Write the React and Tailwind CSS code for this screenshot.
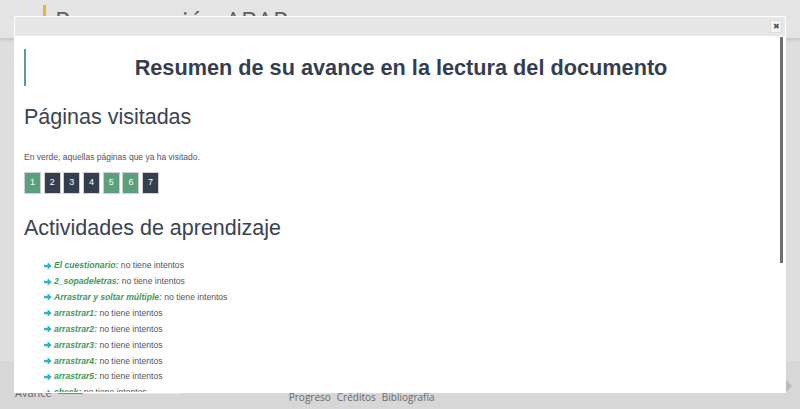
import React from 'react';

// ─── Data ─────────────────────────────────────────────────────────────────────

const PAGES = [
    { n: 1, visited: true },
    { n: 2, visited: false },
    { n: 3, visited: false },
    { n: 4, visited: false },
    { n: 5, visited: true },
    { n: 6, visited: true },
    { n: 7, visited: false },
];

const ACTIVITIES = [
    'El cuestionario',
    '2_sopadeletras',
    'Arrastrar y soltar múltiple',
    'arrastrar1',
    'arrastrar2',
    'arrastrar3',
    'arrastrar4',
    'arrastrar5',
    'check',
];

// ─── Pieces ──────────────────────────────────────────────────────────────────

function ArrowIcon() {
    return (
        <svg viewBox="0 0 10 10" className="w-[8px] h-[8px] shrink-0 text-[#2fb3c9]" fill="currentColor">
            <path d="M0 3.3h4.6V0.4L9.6 5 4.6 9.6V6.7H0z" />
        </svg>
    );
}

function PageChip({ n, visited }) {
    return (
        <span
            className={[
                "w-[17px] h-[22px] flex items-center justify-center border border-[#d0d0d0] text-white text-[9px]",
                visited ? "bg-[#5b9f7d]" : "bg-[#353e4f]",
            ].join(" ")}
        >
            {n}
        </span>
    );
}

// ─── App ─────────────────────────────────────────────────────────────────────

export default function App() {
    return (
        <div className="relative w-[800px] h-[409px] overflow-hidden bg-[#dcdcdc] font-['Liberation_Sans',Arial,sans-serif]">

            {/* Background page */}
            <div className="flex flex-col h-full">
                <header className="h-[38px] bg-[#e4e4e4] shadow-[0_2px_3px_rgba(0,0,0,0.12)] flex items-start pl-[43px] pt-[5px] gap-[9px] relative z-[1]">
                    <span className="w-[3px] h-[28px] bg-[#e8b43a]" />
                    <span className="text-[25px] leading-[28px] text-[#5f5f5f] font-['Open_Sans',sans-serif] mt-[1px]">
                        Programación ABAP
                    </span>
                </header>
                <main className="flex-1 bg-[#dedede]" />
                <footer className="h-[48px] bg-[#d7d7d7] relative flex items-end pb-[4px]">
                    <div className="flex items-center gap-[6px] pl-[15px] pb-[4px]">
                        <span className="text-[11px] text-[#666] font-['Open_Sans',sans-serif]">Avance</span>
                        <span className="w-[123px] h-[3px] bg-[#eaeaea] flex">
                            <span className="w-[25px] h-full bg-[#5b9f7d]" />
                        </span>
                    </div>
                    <nav className="ml-[108px] flex gap-[6px] text-[10px] text-[#6a6a6a] font-['Open_Sans',sans-serif]">
                        <span>Progreso</span>
                        <span>Créditos</span>
                        <span>Bibliografía</span>
                    </nav>
                    <span className="absolute right-[8px] top-[19px] w-0 h-0 border-y-[6px] border-y-transparent border-l-[6px] border-l-[#b9b9b9]" />
                </footer>
            </div>

            {/* Modal */}
            <div className="absolute left-[14px] top-[16px] w-[772px] h-[377px] border border-white bg-white flex flex-col z-10">
                {/* Title bar */}
                <div className="h-[19px] bg-[#e7e7e7] flex items-center justify-end pr-[3px]">
                    <button className="w-[12px] h-[13px] bg-[#f4f4f4] border border-[#dcdcdc] text-[8px] leading-none text-[#555] flex items-center justify-center">
                        ✖
                    </button>
                </div>

                {/* Body */}
                <div className="flex-1 flex overflow-hidden">
                    <div className="flex-1 overflow-hidden pl-[9px] pr-[4px] text-[#353e4f]">

                        <div className="mt-[13px] border-l-[2px] border-[#5b9f7d] h-[37px] flex items-center justify-center">
                            <h1 className="text-[21.7px] font-bold leading-none text-[#353e4f]">
                                Resumen de su avance en la lectura del documento
                            </h1>
                        </div>

                        <h2 className="mt-[17px] text-[21.5px] leading-[28px] text-[#3a4354]">Páginas visitadas</h2>

                        <p className="mt-[20px] text-[8.5px] text-[#555]">En verde, aquellas páginas que ya ha visitado.</p>

                        <div className="mt-[8px] flex gap-[2.7px]">
                            {PAGES.map(p => <PageChip key={p.n} {...p} />)}
                        </div>

                        <h2 className="mt-[20px] text-[21.5px] leading-[28px] text-[#3a4354]">Actividades de aprendizaje</h2>

                        <ul className="mt-[16px] pl-[20px] flex flex-col">
                            {ACTIVITIES.map(a => (
                                <li key={a} className="h-[15.9px] flex items-center gap-[2px] text-[8.6px]">
                                    <ArrowIcon />
                                    <span>
                                        <span className="font-bold italic text-[#3a9b5c]">{a}:</span>
                                        <span className="text-[#555]"> no tiene intentos</span>
                                    </span>
                                </li>
                            ))}
                        </ul>
                    </div>

                    {/* Scrollbar */}
                    <div className="w-[5px] pt-[1px] pr-[1px]">
                        <div className="w-[3px] h-[226px] bg-[#6f6f6f]" />
                    </div>
                </div>
            </div>
        </div>
    );
}
